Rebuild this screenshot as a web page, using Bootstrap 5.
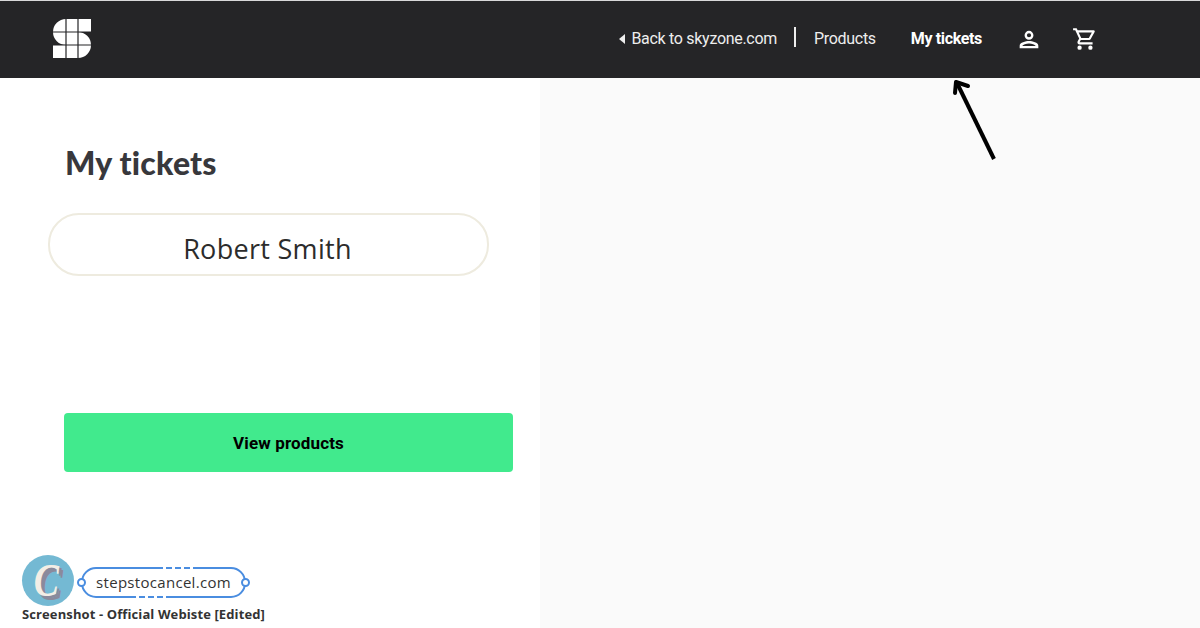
<!DOCTYPE html>
<html lang="en">
<head>
    <meta charset="UTF-8">
    <meta name="viewport" content="width=device-width, initial-scale=1.0">
    <title>My tickets</title>
    <link href="https://cdn.jsdelivr.net/npm/bootstrap@5.3.0/dist/css/bootstrap.min.css" rel="stylesheet">
    <style>
        html, body { height: 628px; overflow: hidden; }
        body { font-family: Roboto, sans-serif; background: #fff; position: relative; }
        .top-bar { height: 78px; background: #252527; border-top: 1px solid #d9d9d9; padding: 0 102px 1px 53px; }
        .logo-link { margin-top: -2px; }
        .top-link { color: #eee; font-size: 16px; letter-spacing: -.3px; text-decoration: none; }
        .top-link:hover { color: #fff; }
        .top-link.is-active { color: #fff; font-weight: 700; letter-spacing: -.35px; }
        .back-link { margin-right: 17px; }
        .back-link svg { margin-right: 6px; }
        .nav-sep { width: 2px; height: 20px; background: #eee; margin: -4px 18px 0 0; }
        .products-link { margin-right: 35px; }
        .tickets-link { margin-right: 33px; }
        .user-icon { margin-right: 29px; }
        .page-body { height: 550px; }
        .left-pane { width: 540px; padding: 66px 27px 0 48px; }
        .right-pane { background: #fafafa; }
        .page-title { font-family: Lato, sans-serif; font-weight: 900; font-size: 32px; line-height: 38px; color: #38383c; margin: 0 0 31px 17px; letter-spacing: .2px; }
        .name-box { width: 441px; height: 63px; border: 2px solid #eeebdf; border-radius: 31px; font-family: "Open Sans", sans-serif; font-size: 27px; color: #2c2c2c; letter-spacing: .3px; padding: 9px 2px 0 0; }
        .view-btn { display: block; width: 449px; height: 59px; margin: 137px 0 0 16px; background: #41ea8d; border: 0; border-radius: 4px; color: #000; font-family: Roboto, sans-serif; font-weight: 700; font-size: 17px; letter-spacing: .15px; line-height: 60px; padding: 0; }
        .view-btn:hover { background: #41ea8d; color: #000; }
        .pointer-arrow { position: absolute; left: 945px; top: 74px; }
        .stamp { position: absolute; left: 22px; top: 555px; }
        .stamp-badge { width: 52px; height: 51px; border-radius: 50%; background: #74b9d3; font-family: "Liberation Serif", serif; font-style: italic; font-weight: 700; font-size: 46px; line-height: 46px; color: #f3eee6; text-shadow: 3px 2px 0 #8a8a9c, 5px 4px 0 #8a8a9c; }
        .stamp-badge span { display: block; margin-left: -3px; transform: scaleX(.82); }
        .stamp-link { position: relative; width: 165px; height: 31px; margin: 12px 0 0 7px; font-family: "Open Sans", sans-serif; font-size: 15px; letter-spacing: .3px; color: #333; background: #fff; border: 2px solid #4a8de0; border-radius: 15px; }
        .stamp-link::before, .stamp-link::after { content: ""; position: absolute; width: 42px; border-top: 2px dashed #4a8de0; background: #fff; }
        .stamp-link::before { top: -2px; left: 74px; }
        .stamp-link::after { bottom: -2px; left: 47px; }
        .stamp-dot { position: absolute; top: 9px; width: 9px; height: 9px; background: #fff; border: 2px solid #4a8de0; border-radius: 50%; }
        .stamp-dot.on-left { left: -6px; }
        .stamp-dot.on-right { right: -6px; }
        .stamp-caption { position: absolute; left: 22px; top: 605px; font-family: "Open Sans", sans-serif; font-weight: 700; font-size: 13px; letter-spacing: .11px; line-height: 18px; color: #333; white-space: nowrap; }
    </style>
</head>
<body>
    <nav class="top-bar d-flex align-items-center">
        <!-- logo: rounded S cut in a 3x3 grid -->
        <a href="#" class="logo-link d-block lh-1">
            <svg width="38" height="39" viewBox="0 0 38 39" class="d-block">
                <path fill="#fff" d="M13 0H38V13H25A13 13 0 0 1 25 39H0V26H13A13 13 0 0 1 13 0Z"/>
                <path stroke="#252527" stroke-width="1.2" fill="none" d="M0 13H38M0 26H38M13 0V39M25 0V39"/>
            </svg>
        </a>
        <div class="d-flex align-items-center ms-auto">
            <a href="#" class="top-link back-link d-flex align-items-center">
                <svg width="6" height="10" viewBox="0 0 6 10"><path fill="#eee" d="M6 0V10L0 5Z"/></svg>
                Back to skyzone.com
            </a>
            <span class="nav-sep"></span>
            <a href="#" class="top-link products-link">Products</a>
            <a href="#" class="top-link is-active tickets-link">My tickets</a>
            <svg class="user-icon" width="28" height="28" viewBox="0 0 24 24"><path fill="#fff" d="M12 5a3.800 3.800 0 1 0 0 7.600A3.800 3.800 0 0 0 12 5Zm0 2a1.800 1.800 0 1 1 0 3.600A1.800 1.800 0 0 1 12 7Zm0 6.800c-2.900 0-8 1.300-8 4V20h16v-2.200c0-2.700-5.100-4-8-4Zm0 2c2.500 0 5 .9 5.800 2.200H6.200C7 16.700 9.500 15.800 12 15.800Z"/></svg>
            <svg width="26" height="26" viewBox="0 0 24 24"><path fill="#fff" d="M15.550 13c.75 0 1.410-.41 1.750-1.030l3.580-6.490A1 1 0 0 0 20.010 4H5.210l-.94-2H1v2h2l3.600 7.590-1.350 2.440C4.520 15.370 5.480 17 7 17h12v-2H7l1.100-2h7.450ZM6.160 6h12.150l-2.760 5H8.530L6.160 6ZM7 18a2 2 0 1 0 0 4 2 2 0 0 0 0-4Zm10 0a2 2 0 1 0 0 4 2 2 0 0 0 0-4Z"/></svg>
        </div>
    </nav>

    <div class="page-body d-flex">
        <div class="left-pane flex-shrink-0">
            <h1 class="page-title">My tickets</h1>
            <div class="name-box d-flex align-items-center justify-content-center">Robert Smith</div>
            <a href="#" class="btn view-btn">View products</a>
        </div>
        <div class="right-pane flex-grow-1"></div>
    </div>

    <!-- annotation arrow over the page -->
    <svg class="pointer-arrow" width="60" height="90" viewBox="0 0 60 90">
        <path d="M49 85 12 9" stroke="#000" stroke-width="4" fill="none"/>
        <path d="M11 8 10 19M11 8 23 12" stroke="#000" stroke-width="4" stroke-linecap="round" fill="none"/>
    </svg>

    <!-- watermark -->
    <div class="stamp d-flex align-items-start">
        <div class="stamp-badge d-flex align-items-center justify-content-center"><span>C</span></div>
        <div class="stamp-link d-flex align-items-center justify-content-center">
            <span class="stamp-dot on-left"></span>
            stepstocancel.com
            <span class="stamp-dot on-right"></span>
        </div>
    </div>
    <div class="stamp-caption">Screenshot - Official Webiste [Edited]</div>

    <script src="https://cdn.jsdelivr.net/npm/bootstrap@5.3.0/dist/js/bootstrap.bundle.min.js"></script>
</body>
</html>
